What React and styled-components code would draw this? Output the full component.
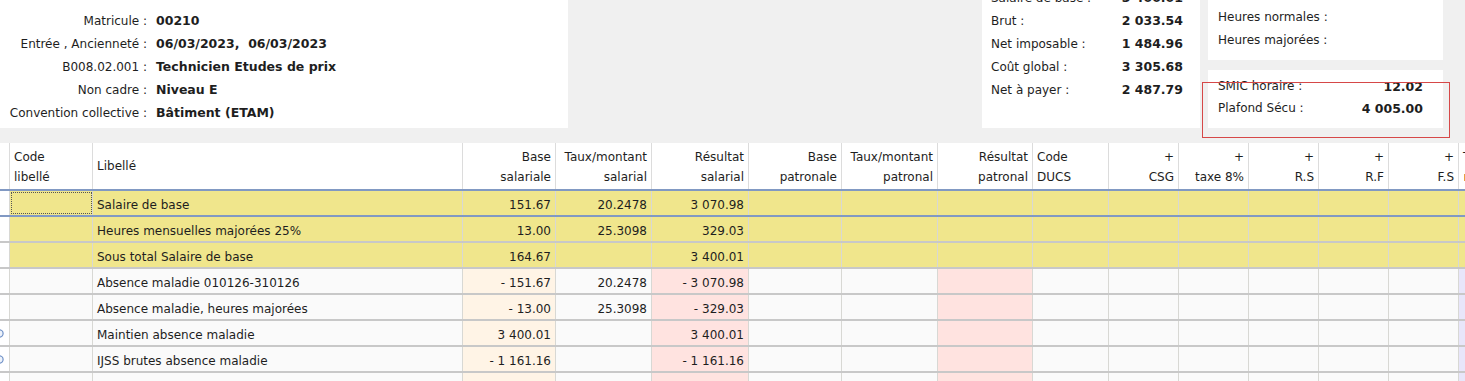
import React from 'react';
import styled, { createGlobalStyle } from 'styled-components';

const GlobalStyle = createGlobalStyle`
  html, body {
    margin: 0;
    padding: 0;
    background: #f0f0f0;
    overflow: hidden;
  }
  body {
    font-family: "DejaVu Sans", Verdana, sans-serif;
    font-size: 12px;
    color: #1e1e1e;
  }
  * { box-sizing: border-box; }
`;

const COLS = '10px 83px 370px 93px 96px 97px 93px 96px 95px 76px 70px 70px 70px 70px 70px 60px';

const identity = [
    ['Matricule :', '00210'],
    ['Entrée , Ancienneté :', '06/03/2023,  06/03/2023'],
    ['B008.02.001 :', 'Technicien Etudes de prix'],
    ['Non cadre :', 'Niveau E'],
    ['Convention collective :', 'Bâtiment (ETAM)'],
];

const totals = [
    ['Salaire de base :', '3 400.01'],
    ['Brut :', '2 033.54'],
    ['Net imposable :', '1 484.96'],
    ['Coût global :', '3 305.68'],
    ['Net à payer :', '2 487.79'],
];

const headers = [
    { lines: [''] },
    { lines: ['Code', 'libellé'] },
    { lines: ['Libellé'], middle: true },
    { lines: ['Base', 'salariale'], right: true },
    { lines: ['Taux/montant', 'salarial'], right: true },
    { lines: ['Résultat', 'salarial'], right: true },
    { lines: ['Base', 'patronale'], right: true },
    { lines: ['Taux/montant', 'patronal'], right: true },
    { lines: ['Résultat', 'patronal'], right: true },
    { lines: ['Code', 'DUCS'] },
    { lines: ['+', 'CSG'], right: true },
    { lines: ['+', 'taxe 8%'], right: true },
    { lines: ['+', 'R.S'], right: true },
    { lines: ['+', 'R.F'], right: true },
    { lines: ['+', 'F.S'], right: true },
];

const rows = [
    { label: 'Salaire de base', base: '151.67', taux: '20.2478', res: '3 070.98', yellow: true, selected: true },
    { label: 'Heures mensuelles majorées 25%', base: '13.00', taux: '25.3098', res: '329.03', yellow: true },
    { label: 'Sous total Salaire de base', base: '164.67', taux: '', res: '3 400.01', yellow: true },
    { label: 'Absence maladie 010126-310126', base: '- 151.67', taux: '20.2478', res: '- 3 070.98' },
    { label: 'Absence maladie, heures majorées', base: '- 13.00', taux: '25.3098', res: '- 329.03' },
    { label: 'Maintien absence maladie', base: '3 400.01', taux: '', res: '3 400.01', marker: true },
    { label: 'IJSS brutes absence maladie', base: '- 1 161.16', taux: '', res: '- 1 161.16', marker: true },
    { label: '', base: '', taux: '', res: '' },
];

// tint of each column on the plain (non yellow) rows
const tints = {
    0: '#ffffff',
    3: '#fff4e6',
    5: '#ffe3e0',
    8: '#ffe3e0',
    15: '#e8e6fa',
};

function cellBg(row, idx){
    if(idx === 0) return '#ffffff';
    if(row.yellow) return '#f0e68c';
    return tints[idx] || '#fafafa';
}

export default function App(){
    return(
        <Page>
            <GlobalStyle />
            <Top>
                <IdentityPanel>
                    {identity.map(([label, value]) => (
                        <React.Fragment key={label}>
                            <IdLabel>{label}</IdLabel>
                            <IdValue>{value}</IdValue>
                        </React.Fragment>
                    ))}
                </IdentityPanel>
                <TotalsPanel>
                    <TotalsList>
                        {totals.map(([label, value]) => (
                            <React.Fragment key={label}>
                                <span>{label}</span>
                                <Amount>{value}</Amount>
                            </React.Fragment>
                        ))}
                    </TotalsList>
                </TotalsPanel>
                <SideColumn>
                    <HoursBox>
                        <span>Heures normales :</span>
                        <span>Heures majorées :</span>
                    </HoursBox>
                    <RatesBox>
                        <span>SMIC horaire :</span>
                        <Amount>12.02</Amount>
                        <span>Plafond Sécu :</span>
                        <Amount>4 005.00</Amount>
                    </RatesBox>
                </SideColumn>
            </Top>

            <Table>
                <HeaderRow>
                    {headers.map((h, i) => (
                        <HeadCell key={i} $right={h.right} $middle={h.middle}>
                            {h.lines.map((l, j) => <div key={j}>{l}</div>)}
                        </HeadCell>
                    ))}
                    <HeadCell>
                        <div>T</div>
                        <div><SortMark /></div>
                    </HeadCell>
                </HeaderRow>

                {rows.map((row, r) => {
                    const values = ['', '', row.label, row.base, row.taux, row.res, '', '', '', '', '', '', '', '', '', ''];
                    return (
                        <Row key={r} $selected={row.selected}>
                            {values.map((v, i) => (
                                <Cell key={i} $bg={cellBg(row, i)} $right={i >= 3 && i <= 8} $focus={row.selected && i === 1}>
                                    {i === 0 && row.marker ? (
                                        <Marker width="9" height="9" viewBox="0 0 9 9">
                                            <circle cx="4.5" cy="4.5" r="3.6" fill="#eef3fb" stroke="#6d8fc6" strokeWidth="1.2" />
                                        </Marker>
                                    ) : v}
                                </Cell>
                            ))}
                        </Row>
                    );
                })}
            </Table>

            <Annotation />
        </Page>
    );
}

const Page = styled.div`
    position: relative;
    width: 1465px;
    height: 381px;
    overflow: hidden;
    background: #f0f0f0;
`;

const Top = styled.div`
    display: flex;
    height: 128px;
    padding-right: 22px;
`;

const IdentityPanel = styled.div`
    width: 568px;
    background: #ffffff;
    padding-top: 9px;
    display: grid;
    grid-template-columns: 147px 1fr;
    grid-auto-rows: 23px;
    column-gap: 9px;
    align-items: center;
    align-content: start;
`;

const IdLabel = styled.span`
    text-align: right;
    white-space: nowrap;
`;

const IdValue = styled.span`
    font-weight: bold;
    font-size: 12.5px;
    white-space: pre;
`;

const TotalsPanel = styled.div`
    width: 218px;
    margin-left: auto;
    background: #ffffff;
    overflow: hidden;
    padding: 0 17px 0 9px;
`;

const TotalsList = styled.div`
    margin-top: -14px;
    display: grid;
    grid-template-columns: 1fr auto;
    grid-auto-rows: 23px;
    align-items: center;
    white-space: nowrap;
`;

const Amount = styled.span`
    font-weight: bold;
    font-size: 12.5px;
    text-align: right;
`;

const SideColumn = styled.div`
    width: 235px;
    margin-left: 8px;
    display: flex;
    flex-direction: column;
    gap: 10px;
`;

const HoursBox = styled.div`
    height: 60px;
    background: #ffffff;
    padding: 5px 10px 0;
    display: grid;
    grid-auto-rows: 23px;
    align-items: center;
    align-content: start;
`;

const RatesBox = styled.div`
    flex: 1;
    background: #ffffff;
    padding: 5px 20px 0 10px;
    display: grid;
    grid-template-columns: 1fr auto;
    grid-auto-rows: 22px;
    align-items: center;
    align-content: start;
`;

const Table = styled.div`
    margin-top: 15px;
    width: 1519px;
`;

const HeaderRow = styled.div`
    display: grid;
    grid-template-columns: ${COLS};
    height: 48px;
    background: #ffffff;
    border-bottom: 2px solid #8199c3;
`;

const HeadCell = styled.div`
    border-right: 1px solid #dcdcdc;
    padding: 4px 4px 0;
    line-height: 20px;
    white-space: nowrap;
    overflow: hidden;
    text-align: ${p => p.$right ? 'right' : 'left'};
    ${p => p.$middle && `
        display: flex;
        align-items: center;
        padding-top: 0;
    `}
`;

const SortMark = styled.span`
    display: inline-block;
    width: 3px;
    height: 7px;
    background: #e8a040;
    margin-left: 1px;
`;

const Row = styled.div`
    display: grid;
    grid-template-columns: ${COLS};
    height: 26px;
    border-bottom: 2px solid ${p => p.$selected ? '#8199c3' : '#c8c8c8'};
`;

const Cell = styled.div`
    background: ${p => p.$bg};
    border-right: 1px solid #d8d8d4;
    padding: 2px 4px 0;
    line-height: 24px;
    white-space: nowrap;
    overflow: hidden;
    text-align: ${p => p.$right ? 'right' : 'left'};
    outline: ${p => p.$focus ? '1px dotted #555' : 'none'};
    outline-offset: -2px;
`;

const Marker = styled.svg`
    display: block;
    margin: 6px 0 0 -9px;
`;

const Annotation = styled.div`
    position: absolute;
    left: 1202px;
    top: 82px;
    width: 248px;
    height: 56px;
    border: 1.5px solid #d64848;
    pointer-events: none;
`;
